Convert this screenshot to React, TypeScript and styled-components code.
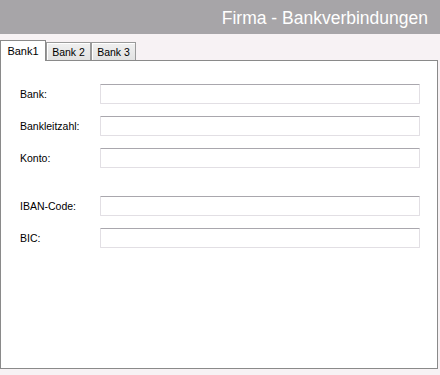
import React from "react";
import styled, { createGlobalStyle } from "styled-components";

const Global = createGlobalStyle`
  html, body { margin: 0; padding: 0; background: #f7f2f4; }
  body { font-family: "Liberation Sans", Arial, sans-serif; }
`;

const Page = styled.div`
  width: 440px;
  height: 375px;
  display: flex;
  flex-direction: column;
  background: #f7f2f4;
  overflow: hidden;
`;

const Header = styled.div`
  height: 34px;
  flex: none;
  background: #a7a5a8;
  display: flex;
  align-items: center;
  justify-content: flex-end;
  padding-right: 12px;
  color: #ffffff;
  font-family: "Liberation Sans", Arial, sans-serif;
  font-size: 17.5px;
  padding-top: 2px;
  box-sizing: border-box;
`;

const TabStrip = styled.div`
  display: flex;
  align-items: flex-end;
  margin-top: 6px;
  height: 20px;
  position: relative;
  z-index: 1;
`;

const Tab = styled.div<{ $active?: boolean }>`
  box-sizing: border-box;
  font-size: 10.5px;
  color: #000;
  display: flex;
  align-items: center;
  justify-content: center;
  ${(p) =>
    p.$active
      ? `
    width: 46px;
    height: 21px;
    margin-bottom: -1px;
    background: #ffffff;
    border: 1px solid #8a8a8a;
    border-bottom: none;
    padding-bottom: 1px;
    font-size: 11px;
  `
      : `
    width: 45px;
    height: 18px;
    background: linear-gradient(#f0f0f0, #e2e2e2);
    border: 1px solid #9a9a9a;
    border-bottom: none;
    box-shadow: inset 1px 1px 0 #ffffff;
    padding-top: 1px;
  `}
`;

const Panel = styled.div`
  box-sizing: border-box;
  width: 438px;
  height: 309px;
  flex: none;
  background: #ffffff;
  border: 1px solid #8a8a8a;
  padding: 23px 17px 0 19px;
  display: flex;
  flex-direction: column;
`;

const Row = styled.div<{ $gap?: number }>`
  display: flex;
  align-items: center;
  height: 20px;
  margin-top: ${(p) => p.$gap ?? 0}px;
`;

const Label = styled.div`
  width: 80px;
  flex: none;
  font-size: 10.5px;
  color: #000;
`;

const Input = styled.div`
  flex: 1;
  height: 20px;
  box-sizing: border-box;
  border: 1px solid #e2dfe4;
  border-top-color: #a9a7ad;
  border-radius: 1px;
  background: #ffffff;
`;

const fields: { label: string; gap: number }[] = [
  { label: "Bank:", gap: 0 },
  { label: "Bankleitzahl:", gap: 12 },
  { label: "Konto:", gap: 12 },
  { label: "IBAN-Code:", gap: 28 },
  { label: "BIC:", gap: 12 },
];

export default function App() {
  return (
    <Page>
      <Global />
      <Header>Firma - Bankverbindungen</Header>
      <TabStrip>
        <Tab $active>Bank1</Tab>
        <Tab>Bank 2</Tab>
        <Tab>Bank 3</Tab>
      </TabStrip>
      <Panel>
        {fields.map((f) => (
          <Row key={f.label} $gap={f.gap}>
            <Label>{f.label}</Label>
            <Input />
          </Row>
        ))}
      </Panel>
    </Page>
  );
}
